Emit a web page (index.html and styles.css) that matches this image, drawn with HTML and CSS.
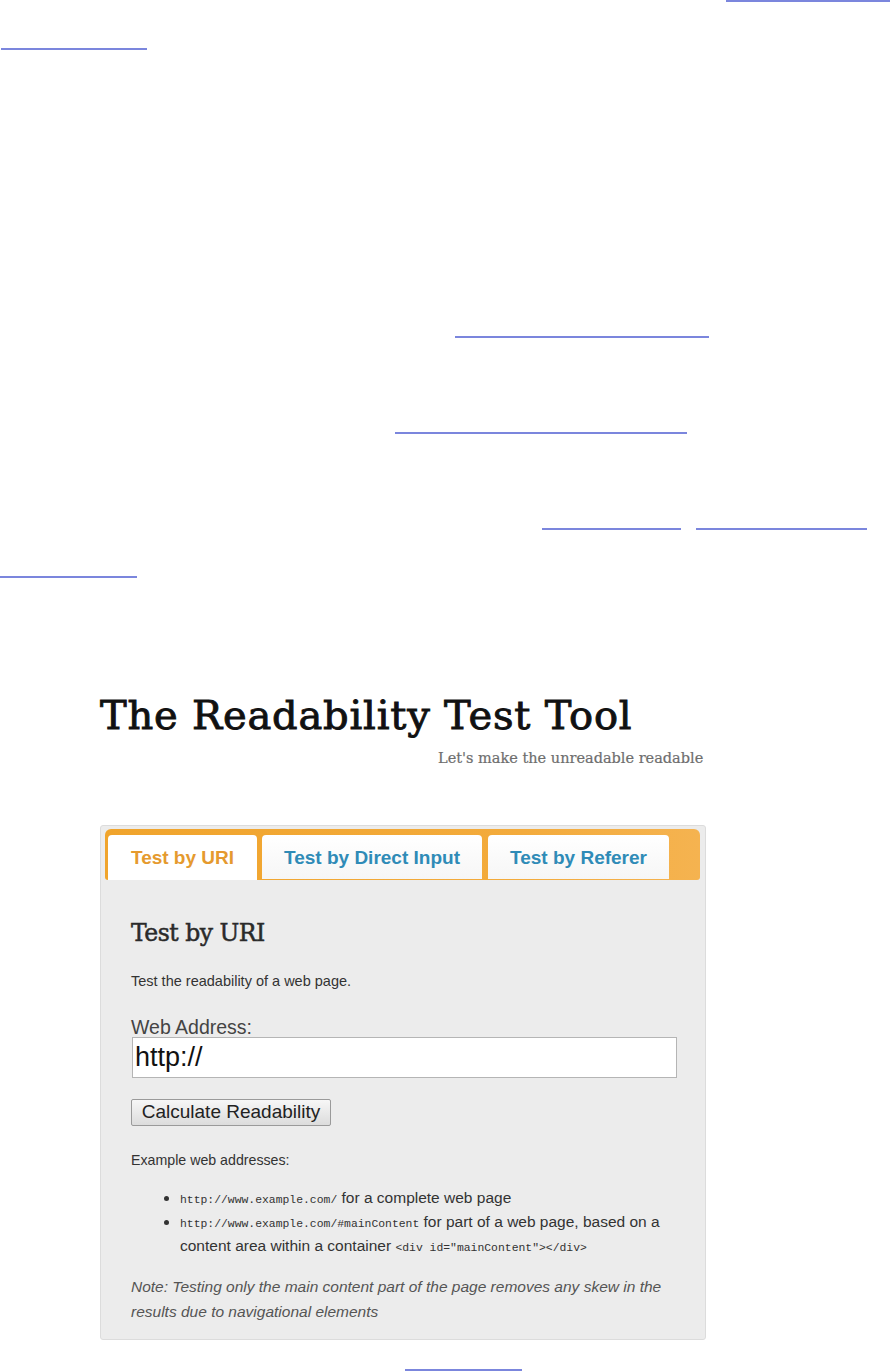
FILE: index.html
```html
<!DOCTYPE html>
<html lang="en">
<head>
<meta charset="utf-8">
<title>The Readability Test Tool</title>
<link rel="stylesheet" href="styles.css">
</head>
<body>
<div class="intro">
  <div class="line l1"><a class="ghost w164" href="#">&nbsp;</a></div>
  <div class="line l2"><a class="ghost w146" href="#">&nbsp;</a></div>
  <div class="line l3"><a class="ghost w254" href="#">&nbsp;</a></div>
  <div class="line l4"><a class="ghost w292" href="#">&nbsp;</a></div>
  <div class="line l5"><a class="ghost w139" href="#">&nbsp;</a><a class="ghost w171 gap" href="#">&nbsp;</a></div>
  <div class="line l6"><a class="ghost w137" href="#">&nbsp;</a></div>
</div>

<div class="shot">
  <div class="brand">
    <h1 class="title">The Readability Test Tool</h1>
    <p class="tagline">Let's make the unreadable readable</p>
  </div>

  <div class="panel">
    <div class="tabbar">
      <div class="tab active">Test by URI</div>
      <div class="tab t2">Test by Direct Input</div>
      <div class="tab t3">Test by Referer</div>
    </div>
    <div class="content">
      <h2 class="heading">Test by URI</h2>
      <p class="lead">Test the readability of a web page.</p>
      <label class="label">Web Address:</label>
      <div class="input">http://</div>
      <div class="btnrow"><span class="button">Calculate Readability</span></div>
      <p class="examples">Example web addresses:</p>
      <ul class="list">
        <li><code>http://www.example.com/</code> for a complete web page</li>
        <li><code>http://www.example.com/#mainContent</code> for part of a web page, based on a content area within a container <code>&lt;div id="mainContent"&gt;&lt;/div&gt;</code></li>
      </ul>
      <p class="note">Note: Testing only the main content part of the page removes any skew in the results due to navigational elements</p>
    </div>
  </div>
</div>

<div class="footer-line"><a class="ghost w117" href="#">&nbsp;</a></div>
</body>
</html>
```

FILE: styles.css
```css
html, body {
  margin: 0;
  padding: 0;
  background: #ffffff;
  font-family: "Liberation Sans", Arial, sans-serif;
}

.intro {
  display: flex;
  flex-direction: column;
}

.line {
  display: flex;
  height: 2px;
}

.ghost {
  display: block;
  height: 2px;
  background: #7b86dd;
  color: transparent;
  font-size: 1px;
  line-height: 2px;
  overflow: hidden;
}

.w164 { width: 164px; }
.w146 { width: 146px; }
.w254 { width: 254px; }
.w292 { width: 292px; }
.w139 { width: 139px; }
.w171 { width: 171px; }
.w137 { width: 137px; }
.w117 { width: 117px; }

.gap { margin-left: 15px; }

.l1 { padding-left: 726px; }
.l2 { margin-top: 46px; padding-left: 1px; }
.l3 { margin-top: 286px; padding-left: 455px; }
.l4 { margin-top: 94px; padding-left: 395px; }
.l5 { margin-top: 94px; padding-left: 542px; }
.l6 { margin-top: 46px; padding-left: 0; }

.shot {
  margin-left: 100px;
  width: 606px;
  padding-top: 113px;
}

.brand {
  display: flex;
  flex-direction: column;
}

.title {
  margin: 0;
  font-family: "DejaVu Serif", serif;
  font-weight: normal;
  font-size: 40px;
  line-height: 48px;
  color: #111;
  letter-spacing: 0.8px;
  -webkit-text-stroke: 0.9px #111;
  white-space: nowrap;
}

.tagline {
  margin: 10px 0 0 338px;
  font-family: "DejaVu Serif", serif;
  font-size: 14.5px;
  color: #6e6e6e;
  line-height: 18px;
  white-space: nowrap;
  -webkit-text-stroke: 0.2px #6e6e6e;
}

.panel {
  margin-top: 58px;
  background: #ececec;
  border: 1px solid #dcdcdc;
  border-radius: 3px;
  padding: 3px 5px 0 4px;
  height: 515px;
  box-sizing: border-box;
}

.tabbar {
  display: flex;
  align-items: flex-end;
  height: 51px;
  box-sizing: border-box;
  padding: 6px 0 0 3px;
  background: linear-gradient(90deg, #f0a42c, #f3ab3c 70%, #f5b350);
  border-radius: 6px 6px 3px 3px;
}

.tab {
  height: 44px;
  margin-bottom: 1px;
  box-sizing: border-box;
  display: flex;
  align-items: center;
  justify-content: center;
  font-weight: bold;
  font-size: 19px;
  color: #2f8bb7;
  background: linear-gradient(#ffffff, #f6f6f6);
  border-radius: 4px 4px 0 0;
  padding-top: 1px;
  white-space: nowrap;
}

.tab.active {
  width: 149px;
  height: 45px;
  margin-bottom: 0;
  color: #e59a2e;
  background: #ffffff;
}
.t2 { width: 220px; margin-left: 5px; }
.t3 { width: 181px; margin-left: 6px; }

.content {
  padding: 0 0 0 26px;
  color: #333;
}

.heading {
  margin: 39px 0 0;
  font-family: "DejaVu Serif", serif;
  font-weight: normal;
  font-size: 23.5px;
  line-height: 28px;
  letter-spacing: -0.5px;
  color: #2a2a2a;
  -webkit-text-stroke: 0.5px #2a2a2a;
}

.lead {
  margin: 25px 0 0;
  font-size: 14.5px;
  line-height: 18px;
  color: #333;
}

.label {
  display: block;
  margin-top: 28px;
  font-size: 19.5px;
  line-height: 19px;
  color: #444;
}

.input {
  margin-left: 1px;
  width: 545px;
  height: 41px;
  box-sizing: border-box;
  border: 1px solid #b5b5b5;
  background: #fff;
  font-size: 27px;
  line-height: 38px;
  padding-left: 2px;
  color: #111;
}

.btnrow {
  display: flex;
  margin-top: 21px;
}

.button {
  display: block;
  width: 200px;
  height: 27px;
  box-sizing: border-box;
  border: 1px solid #9a9a9a;
  border-radius: 2px;
  background: linear-gradient(#f7f7f7, #dcdcdc);
  font-size: 19px;
  line-height: 24px;
  text-align: center;
  color: #222;
  white-space: nowrap;
}

.examples {
  margin: 25px 0 0;
  font-size: 14.2px;
  line-height: 18px;
  color: #333;
}

.list {
  margin: 17px 0 0;
  padding-left: 49px;
  font-size: 15.5px;
  line-height: 24px;
  color: #333;
  width: 510px;
}

code {
  font-family: "Liberation Mono", monospace;
  font-size: 11.4px;
  line-height: 1;
  color: #333;
}

.note {
  margin: 17px 0 0;
  font-style: italic;
  font-size: 15.5px;
  line-height: 24.5px;
  color: #555;
  width: 545px;
}

.footer-line {
  display: flex;
  padding-left: 405px;
  margin-top: 29px;
}
```
